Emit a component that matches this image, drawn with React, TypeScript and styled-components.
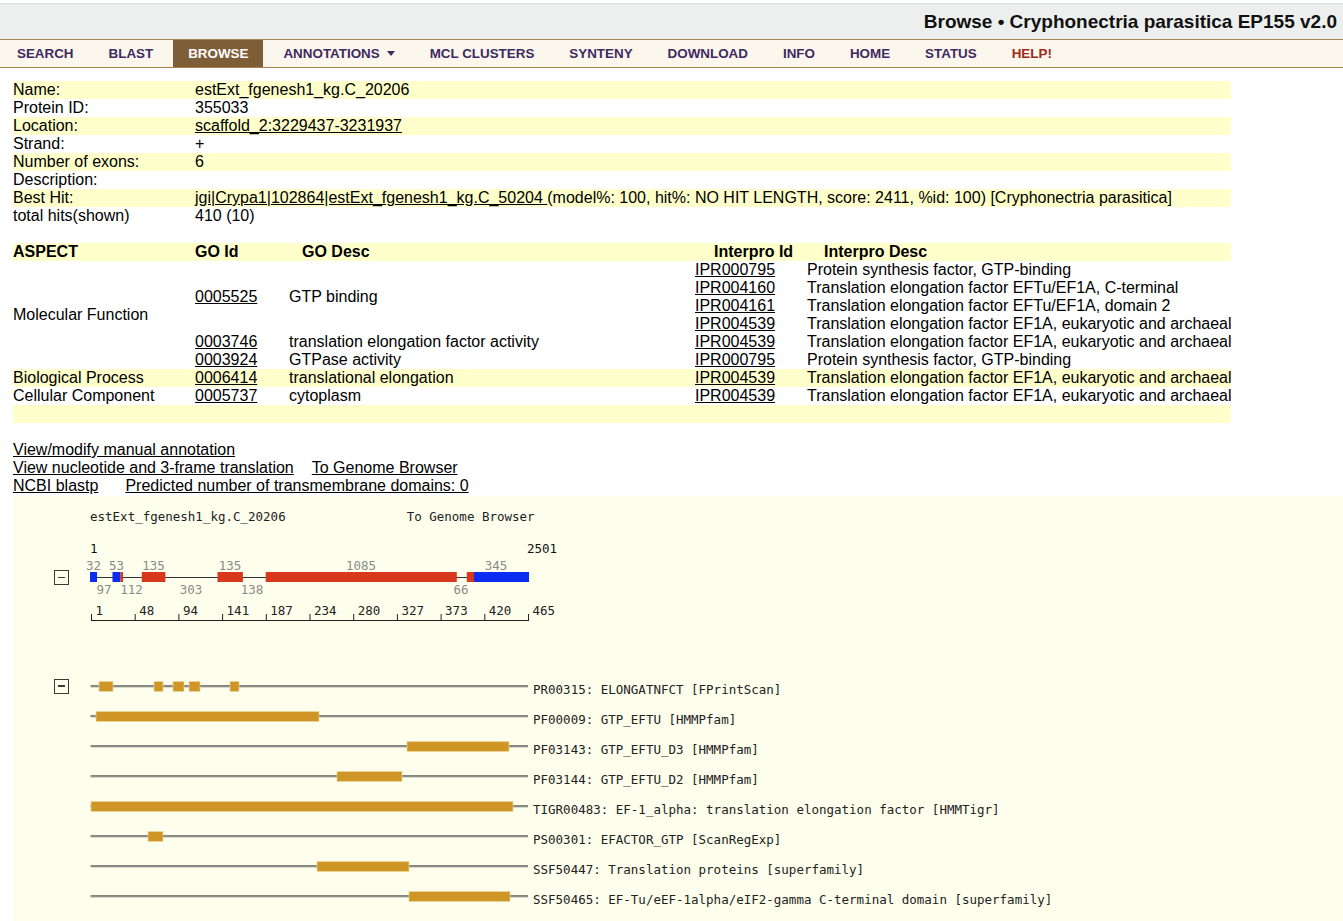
import React from "react";
import styled, { createGlobalStyle } from "styled-components";

const GlobalStyle = createGlobalStyle`
  html, body { margin: 0; padding: 0; background: #fff; overflow: hidden; }
  body {
    font-family: "Liberation Sans", Arial, Helvetica, sans-serif;
    font-size: 16px;
    color: #000;
  }
  a { color: #000; }
`;

const TopBar = styled.header`
  margin-top: 3px;
  height: 35px;
  border-top: 1px solid #dcdcdc;
  background: #edefee;
  display: flex;
  align-items: center;
  justify-content: flex-end;
  padding-right: 6px;
`;

const Title = styled.h1`
  margin: 0;
  font-size: 19px;
  font-weight: bold;
  color: #111;
`;

const Nav = styled.nav`
  display: flex;
  gap: 5px;
  height: 27px;
  padding-left: 2px;
  border-top: 1px solid #a5834f;
  border-bottom: 1px solid #a5834f;
  background: #fbf7ec;
`;

const NavItem = styled.a<{ $active?: boolean; $help?: boolean }>`
  display: flex;
  align-items: center;
  gap: 7px;
  padding: 0 15px 1px;
  font-size: 13.4px;
  font-weight: bold;
  text-transform: uppercase;
  text-decoration: none;
  color: ${(p) => (p.$active ? "#ffffff" : p.$help ? "#a1291b" : "#3e2a62")};
  background: ${(p) => (p.$active ? "#7e5e37" : "transparent")};
`;

const Caret = styled.span`
  width: 0;
  height: 0;
  border-left: 4px solid transparent;
  border-right: 4px solid transparent;
  border-top: 5px solid #3e2a62;
`;

const DataTable = styled.table<{ $top: number }>`
  margin: ${(p) => p.$top}px 0 0 13px;
  width: 1218px;
  border-collapse: collapse;
  border-spacing: 0;
  table-layout: fixed;
`;

const DataRow = styled.tr<{ $hl?: boolean }>`
  background: ${(p) => (p.$hl ? "#ffffcc" : "transparent")};
`;

const Cell = styled.td`
  padding: 0;
  height: 18px;
  line-height: 18px;
  vertical-align: middle;
  white-space: nowrap;
`;

const HeadCell = styled.th<{ $indent?: number }>`
  padding: 0 0 0 ${(p) => p.$indent ?? 0}px;
  height: 18px;
  line-height: 18px;
  text-align: left;
  font-weight: bold;
  white-space: nowrap;
`;

const Links = styled.div`
  margin: 18px 0 1px 13px;
  line-height: 18px;
`;

const LinkLine = styled.div`
  display: flex;
  height: 18px;
`;

const TextLink = styled.a<{ $gap?: number }>`
  margin-left: ${(p) => p.$gap ?? 0}px;
  color: #000;
  text-decoration: underline;
`;

const Panel = styled.section`
  margin-left: 13px;
  height: 480px;
  padding: 13px 0 0 41px;
  background: #fefeec;
  font-family: "DejaVu Sans Mono", "Liberation Mono", monospace;
  font-size: 12.5px;
  color: #222;
`;

const DiagramHead = styled.div`
  display: flex;
  padding-left: 36px;
  height: 16px;
  line-height: 16px;
  gap: 121px;
`;

const GeneRow = styled.div`
  display: flex;
  align-items: flex-start;
  margin-top: 13px;
`;

const Toggle = styled.span<{ $top?: number }>`
  position: relative;
  box-sizing: border-box;
  flex: none;
  width: 15px;
  height: 15px;
  margin-top: ${(p) => p.$top ?? 0}px;
  margin-right: 21px;
  border: 1.5px solid #3a3a3a;
  &::after {
    content: "";
    position: absolute;
    left: 3px;
    right: 3px;
    top: 5.5px;
    height: 1.5px;
    background: #3a3a3a;
  }
`;

const ToggleSpacer = styled.span`
  flex: none;
  width: 15px;
  margin-right: 21px;
`;

const GeneSvg = styled.svg`
  overflow: visible;
  flex: none;
`;

const DomainList = styled.div`
  margin-top: 43px;
`;

const DomainRow = styled.div`
  display: flex;
  align-items: center;
  height: 30px;
`;

const Track = styled.svg`
  flex: none;
  overflow: visible;
`;

const DomainLabel = styled.span`
  margin-left: 5px;
  padding-top: 6px;
  white-space: nowrap;
  color: #222;
`;

const RED = "#d8391c";
const BLUE = "#0b2df2";
const GOLD = "#cf9626";

type Exon = { x1: number; x2: number; color: string };
const exons: Exon[] = [
  { x1: 0, x2: 7, color: BLUE },
  { x1: 22.5, x2: 30.4, color: BLUE },
  { x1: 30.4, x2: 33, color: RED },
  { x1: 51.8, x2: 75.4, color: RED },
  { x1: 127.5, x2: 152.9, color: RED },
  { x1: 175.7, x2: 366.8, color: RED },
  { x1: 376.8, x2: 384, color: RED },
  { x1: 384, x2: 439, color: BLUE },
];

const aboveLabels = [
  { x: 3.5, t: "32" },
  { x: 26.5, t: "53" },
  { x: 63.5, t: "135" },
  { x: 140, t: "135" },
  { x: 271, t: "1085" },
  { x: 406, t: "345" },
];

const belowLabels = [
  { x: 14, t: "97" },
  { x: 41.5, t: "112" },
  { x: 101, t: "303" },
  { x: 162, t: "138" },
  { x: 371, t: "66" },
];

const ticks = ["1", "48", "94", "141", "187", "234", "280", "327", "373", "420", "465"];

const GeneDiagram = () => (
  <GeneSvg width={480} height={90} fontFamily='"DejaVu Sans Mono", monospace' fontSize={12.5}>
    <text x={0} y={14.5} fill="#111">1</text>
    <text x={467} y={14.5} fill="#111" textAnchor="end">2501</text>
    {aboveLabels.map((l, i) => (
      <text key={"a" + i} x={l.x} y={31.5} fill="#8a8a8a" textAnchor="middle">{l.t}</text>
    ))}
    <line x1={0} y1={39.5} x2={439} y2={39.5} stroke="#333" strokeWidth={1} />
    {exons.map((e, i) => (
      <rect key={i} x={e.x1} y={34} width={e.x2 - e.x1} height={10} fill={e.color} />
    ))}
    {belowLabels.map((l, i) => (
      <text key={"b" + i} x={l.x} y={55.5} fill="#8a8a8a" textAnchor="middle">{l.t}</text>
    ))}
    <line x1={1.5} y1={82.5} x2={439} y2={82.5} stroke="#222" strokeWidth={1} />
    {ticks.map((t, i) => {
      const x = 1.5 + i * 43.7;
      return (
        <g key={t}>
          <line x1={x} y1={76} x2={x} y2={83} stroke="#222" strokeWidth={1} />
          <text x={x + 4} y={76.5} fill="#222">{t}</text>
        </g>
      );
    })}
  </GeneSvg>
);

type Domain = { bars: [number, number][]; label?: string };
const domains: Domain[] = [
  { bars: [[99, 113], [154, 163], [173, 184], [189, 200], [230, 239]], label: "PR00315: ELONGATNFCT [FPrintScan]" },
  { bars: [[96, 319]], label: "PF00009: GTP_EFTU [HMMPfam]" },
  { bars: [[407, 509]], label: "PF03143: GTP_EFTU_D3 [HMMPfam]" },
  { bars: [[337, 402]], label: "PF03144: GTP_EFTU_D2 [HMMPfam]" },
  { bars: [[91, 513]], label: "TIGR00483: EF-1_alpha: translation elongation factor [HMMTigr]" },
  { bars: [[148, 163]], label: "PS00301: EFACTOR_GTP [ScanRegExp]" },
  { bars: [[317, 409]], label: "SSF50447: Translation proteins [superfamily]" },
  { bars: [[409, 510]], label: "SSF50465: EF-Tu/eEF-1alpha/eIF2-gamma C-terminal domain [superfamily]" },
  { bars: [[91, 340]] },
];

const DomainTrack = ({ bars }: { bars: [number, number][] }) => (
  <Track width={438} height={30}>
    <line x1={0.5} y1={15} x2={438} y2={15} stroke="#5e5e5e" strokeWidth={1.3} />
    <line x1={0.5} y1={16.3} x2={438} y2={16.3} stroke="#c4c4b8" strokeWidth={0.8} />
    {bars.map(([a, b], i) => (
      <rect key={i} x={a - 90} y={10.5} width={b - a} height={10} fill={GOLD} stroke="#ecd9a0" strokeWidth={0.6} />
    ))}
  </Track>
);

const navItems = ["Search", "Blast", "Browse", "Annotations", "MCL Clusters", "Synteny", "Download", "Info", "Home", "Status", "Help!"];

export default function App() {
  return (
    <>
      <GlobalStyle />
      <TopBar>
        <Title>Browse • Cryphonectria parasitica EP155 v2.0</Title>
      </TopBar>
      <Nav>
        {navItems.map((n) => (
          <NavItem key={n} $active={n === "Browse"} $help={n === "Help!"}>
            {n}
            {n === "Annotations" && <Caret />}
          </NavItem>
        ))}
      </Nav>

      <DataTable $top={13}>
        <colgroup>
          <col style={{ width: 182 }} />
          <col />
        </colgroup>
        <tbody>
          <DataRow $hl><Cell>Name:</Cell><Cell>estExt_fgenesh1_kg.C_20206</Cell></DataRow>
          <DataRow><Cell>Protein ID:</Cell><Cell>355033</Cell></DataRow>
          <DataRow $hl><Cell>Location:</Cell><Cell><TextLink>scaffold_2:3229437-3231937</TextLink></Cell></DataRow>
          <DataRow><Cell>Strand:</Cell><Cell>+</Cell></DataRow>
          <DataRow $hl><Cell>Number of exons:</Cell><Cell>6</Cell></DataRow>
          <DataRow><Cell>Description:</Cell><Cell></Cell></DataRow>
          <DataRow $hl>
            <Cell>Best Hit:</Cell>
            <Cell>
              <TextLink>jgi|Crypa1|102864|estExt_fgenesh1_kg.C_50204 </TextLink>(model%: 100, hit%: NO HIT LENGTH, score: 2411, %id: 100) [Cryphonectria parasitica]
            </Cell>
          </DataRow>
          <DataRow><Cell>total hits(shown)</Cell><Cell>410 (10)</Cell></DataRow>
        </tbody>
      </DataTable>

      <DataTable $top={18}>
        <colgroup>
          <col style={{ width: 182 }} />
          <col style={{ width: 94 }} />
          <col style={{ width: 406 }} />
          <col style={{ width: 112 }} />
          <col />
        </colgroup>
        <tbody>
          <DataRow $hl>
            <HeadCell>ASPECT</HeadCell>
            <HeadCell>GO Id</HeadCell>
            <HeadCell $indent={13}>GO Desc</HeadCell>
            <HeadCell $indent={19}>Interpro Id</HeadCell>
            <HeadCell $indent={17}>Interpro Desc</HeadCell>
          </DataRow>
          <DataRow>
            <Cell rowSpan={6}>Molecular Function</Cell>
            <Cell rowSpan={4}><TextLink>0005525</TextLink></Cell>
            <Cell rowSpan={4}>GTP binding</Cell>
            <Cell><TextLink>IPR000795</TextLink></Cell>
            <Cell>Protein synthesis factor, GTP-binding</Cell>
          </DataRow>
          <DataRow>
            <Cell><TextLink>IPR004160</TextLink></Cell>
            <Cell>Translation elongation factor EFTu/EF1A, C-terminal</Cell>
          </DataRow>
          <DataRow>
            <Cell><TextLink>IPR004161</TextLink></Cell>
            <Cell>Translation elongation factor EFTu/EF1A, domain 2</Cell>
          </DataRow>
          <DataRow>
            <Cell><TextLink>IPR004539</TextLink></Cell>
            <Cell>Translation elongation factor EF1A, eukaryotic and archaeal</Cell>
          </DataRow>
          <DataRow>
            <Cell><TextLink>0003746</TextLink></Cell>
            <Cell>translation elongation factor activity</Cell>
            <Cell><TextLink>IPR004539</TextLink></Cell>
            <Cell>Translation elongation factor EF1A, eukaryotic and archaeal</Cell>
          </DataRow>
          <DataRow>
            <Cell><TextLink>0003924</TextLink></Cell>
            <Cell>GTPase activity</Cell>
            <Cell><TextLink>IPR000795</TextLink></Cell>
            <Cell>Protein synthesis factor, GTP-binding</Cell>
          </DataRow>
          <DataRow $hl>
            <Cell>Biological Process</Cell>
            <Cell><TextLink>0006414</TextLink></Cell>
            <Cell>translational elongation</Cell>
            <Cell><TextLink>IPR004539</TextLink></Cell>
            <Cell>Translation elongation factor EF1A, eukaryotic and archaeal</Cell>
          </DataRow>
          <DataRow>
            <Cell>Cellular Component</Cell>
            <Cell><TextLink>0005737</TextLink></Cell>
            <Cell>cytoplasm</Cell>
            <Cell><TextLink>IPR004539</TextLink></Cell>
            <Cell>Translation elongation factor EF1A, eukaryotic and archaeal</Cell>
          </DataRow>
          <DataRow $hl>
            <Cell colSpan={5}></Cell>
          </DataRow>
        </tbody>
      </DataTable>

      <Links>
        <LinkLine><TextLink>View/modify manual annotation</TextLink></LinkLine>
        <LinkLine>
          <TextLink>View nucleotide and 3-frame translation</TextLink>
          <TextLink $gap={18}>To Genome Browser</TextLink>
        </LinkLine>
        <LinkLine>
          <TextLink>NCBI blastp</TextLink>
          <TextLink $gap={27}>Predicted number of transmembrane domains: 0</TextLink>
        </LinkLine>
      </Links>

      <Panel>
        <DiagramHead>
          <span>estExt_fgenesh1_kg.C_20206</span>
          <span>To Genome Browser</span>
        </DiagramHead>
        <GeneRow>
          <Toggle $top={32} />
          <GeneDiagram />
        </GeneRow>
        <DomainList>
          {domains.map((d, i) => (
            <DomainRow key={i}>
              {i === 0 ? <Toggle /> : <ToggleSpacer />}
              <DomainTrack bars={d.bars} />
              {d.label && <DomainLabel>{d.label}</DomainLabel>}
            </DomainRow>
          ))}
        </DomainList>
      </Panel>
    </>
  );
}
